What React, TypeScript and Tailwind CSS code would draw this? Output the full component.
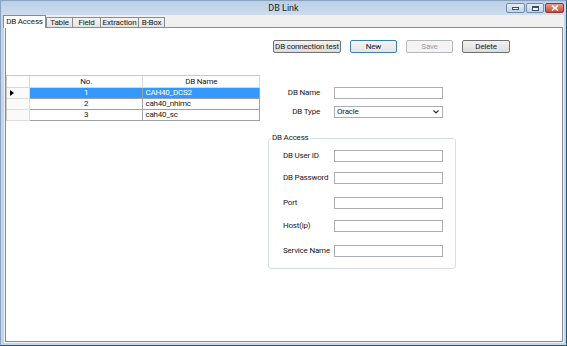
import React from "react";

const rows = [
  { no: 1, name: "CAH40_DCS2", selected: true },
  { no: 2, name: "cah40_nhimc", selected: false },
  { no: 3, name: "cah40_sc", selected: false },
];

const tabs = [
  { label: "DB Access", cls: "w-[43px] h-[13px] -ml-[2px] -mb-px bg-white z-10" },
  { label: "Table", cls: "w-[27px] h-[10px] bg-linear-to-b from-[#f3f3f3] to-[#e3e3e3]" },
  { label: "Field", cls: "w-[29px] h-[10px] -ml-px bg-linear-to-b from-[#f3f3f3] to-[#e3e3e3]" },
  { label: "Extraction", cls: "w-[39px] h-[10px] -ml-px bg-linear-to-b from-[#f3f3f3] to-[#e3e3e3]" },
  { label: "B-Box", cls: "w-[27px] h-[10px] -ml-px bg-linear-to-b from-[#f3f3f3] to-[#e3e3e3]" },
];

const btnStyles = {
  normal: "border-[#707070] bg-linear-to-b from-[#f2f2f2] to-[#dddddd] text-[#1a1a1a]",
  primary: "border-[#3c7fb1] bg-linear-to-b from-[#f5f5f5] to-[#e4e4e4] text-[#1a1a1a]",
  disabled: "border-[#b5b9bc] bg-[#f4f4f4] text-[#9c9c9c]",
};

function Button({ label, kind, width }: { label: string; kind: keyof typeof btnStyles; width: string }) {
  return (
    <div className={`${width} h-[13px] border rounded-[2px] flex items-center justify-center whitespace-nowrap ${btnStyles[kind]}`}>
      {label}
    </div>
  );
}

function TextBox() {
  return <div className="w-[109px] h-[12px] bg-white border border-[#abadb3]" />;
}

function FieldRow({ label, gap, children }: { label: string; gap: string; children: React.ReactNode }) {
  return (
    <div className={`flex items-center h-[12px] ${gap}`}>
      <span className="w-[51px] whitespace-nowrap">{label}</span>
      {children}
    </div>
  );
}

function CaptionButtons() {
  return (
    <div className="flex items-start justify-end gap-[1px] pr-[2px] pt-[2px]">
      <div className="w-[19px] h-[10px] rounded-[2px] border border-[#6f8cab] bg-linear-to-b from-[#e4edf7] to-[#c3d3e6] flex items-end justify-center pb-[2px]">
        <div className="w-[7px] h-[3px] bg-white border border-[#3b4f66]" />
      </div>
      <div className="w-[18px] h-[10px] rounded-[2px] border border-[#6f8cab] bg-linear-to-b from-[#e4edf7] to-[#c3d3e6] flex items-center justify-center">
        <div className="w-[7px] h-[5px] bg-white border border-[#3b4f66] border-t-2" />
      </div>
      <div className="w-[19px] h-[10px] rounded-[2px] border border-[#8d3a31] bg-linear-to-b from-[#e59a8d] to-[#c5493a] flex items-center justify-center">
        <svg width="8" height="6" viewBox="0 0 8 6">
          <path d="M1 0.5 L7 5.5 M7 0.5 L1 5.5" stroke="#fff" strokeWidth="1.6" />
        </svg>
      </div>
    </div>
  );
}

export default function App() {
  return (
    <div className="w-[567px] h-[346px] flex flex-col overflow-hidden border border-[#8aa3bf] border-r-[#1d5b70] border-b-[#1d5b70] bg-[#c3d6ec] text-[8px] leading-none tracking-[-0.2px] text-[#1a1a1a] font-['Roboto',Arial,sans-serif]">
      {/* title bar */}
      <div className="h-[14px] grid grid-cols-[1fr_auto_1fr] items-start bg-linear-to-b from-[#bccfe6] to-[#cddcef]">
        <div />
        <div className="pt-[3px] text-[9px] tracking-normal">DB Link</div>
        <CaptionButtons />
      </div>

      {/* client area */}
      <div className="flex-1 flex flex-col pl-[3px] pr-[2px] pb-[2px]">
        <div className="flex-1 flex flex-col bg-[#f0f0f0] px-[1px] pb-[1px]">
          <div className="h-[12px] flex items-end">
            {tabs.map((t) => (
              <div
                key={t.label}
                className={`relative flex items-center justify-center whitespace-nowrap border border-b-0 border-[#898c95] ${t.cls}`}
              >
                {t.label}
              </div>
            ))}
          </div>

          <div className="flex-1 flex flex-col bg-white border border-[#898c95]">
            <div className="mt-[12px] ml-[267px] flex gap-[9px]">
              <Button label="DB connection test" kind="normal" width="w-[68px]" />
              <Button label="New" kind="primary" width="w-[47px]" />
              <Button label="Save" kind="disabled" width="w-[47px]" />
              <Button label="Delete" kind="normal" width="w-[48px]" />
            </div>

            <div className="flex items-start">
              {/* data grid */}
              <div className="mt-[22px] w-[254px] border-t border-l border-[#c8c8c8] flex flex-col">
                <div className="h-[12px] flex">
                  <div className="w-[23px] border-r border-b border-[#d8d8d8]" />
                  <div className="w-[114px] border-r border-b border-[#d8d8d8] flex items-center justify-center">No.</div>
                  <div className="w-[117px] border-r border-b border-[#d8d8d8] flex items-center justify-center">DB Name</div>
                </div>
                {rows.map((r) => (
                  <div key={r.no} className="h-[11px] flex">
                    <div className="w-[23px] border-r border-b border-[#dcdcdc] bg-[#fafafa] flex items-center pl-[3px]">
                      {r.selected && (
                        <svg width="4" height="6" viewBox="0 0 4 6">
                          <path d="M0 0 L4 3 L0 6 Z" fill="#000" />
                        </svg>
                      )}
                    </div>
                    <div
                      className={`w-[114px] border-r border-b border-[#a0a0a0] flex items-center justify-center ${
                        r.selected ? "bg-[#3399ff] text-white" : "bg-white"
                      }`}
                    >
                      {r.no}
                    </div>
                    <div
                      className={`w-[117px] border-r border-b border-[#a0a0a0] flex items-center pl-[2px] ${
                        r.selected ? "bg-[#3399ff] text-white" : "bg-white"
                      }`}
                    >
                      {r.name}
                    </div>
                  </div>
                ))}
              </div>

              {/* connection form */}
              <div className="ml-[8px] mt-[34px] flex flex-col">
                <div className="flex items-center h-[12px]">
                  <span className="w-[52px] text-right">DB Name</span>
                  <div className="ml-[14px]">
                    <TextBox />
                  </div>
                </div>
                <div className="flex items-center h-[12px] mt-[7px]">
                  <span className="w-[52px] text-right">DB Type</span>
                  <div className="ml-[14px] w-[109px] h-[12px] bg-white border border-[#abadb3] flex items-center justify-between pl-[2px] pr-[3px]">
                    <span>Oracle</span>
                    <svg width="6" height="4" viewBox="0 0 6 4">
                      <path d="M0.5 0.5 L3 3 L5.5 0.5" stroke="#333" strokeWidth="1.2" fill="none" />
                    </svg>
                  </div>
                </div>

                <fieldset className="mt-[15px] w-[188px] border border-[#d5dfe5] rounded-[3px] pb-[11px]">
                  <legend className="ml-[2px] px-[1px] leading-[10px]">DB Access</legend>
                  <div className="pl-[14px] flex flex-col">
                    <FieldRow label="DB User ID" gap="mt-[7px]">
                      <TextBox />
                    </FieldRow>
                    <FieldRow label="DB Password" gap="mt-[10px]">
                      <TextBox />
                    </FieldRow>
                    <FieldRow label="Port" gap="mt-[13px]">
                      <TextBox />
                    </FieldRow>
                    <FieldRow label="Host(ip)" gap="mt-[11px]">
                      <TextBox />
                    </FieldRow>
                    <FieldRow label="Service Name" gap="mt-[13px]">
                      <TextBox />
                    </FieldRow>
                  </div>
                </fieldset>
              </div>
            </div>
          </div>
        </div>
      </div>
    </div>
  );
}
